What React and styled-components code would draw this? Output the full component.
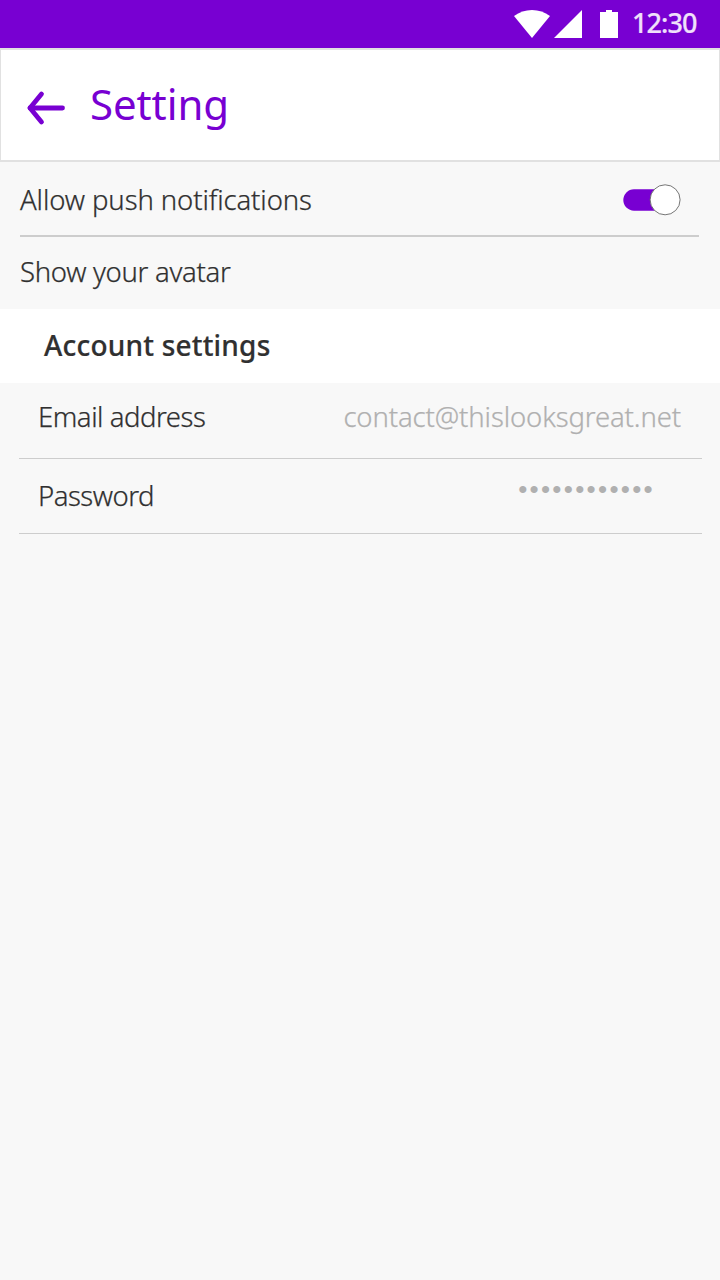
import React from "react";
import styled, { createGlobalStyle } from "styled-components";

const GlobalStyle = createGlobalStyle`
  * { box-sizing: border-box; }
  body {
    margin: 0;
    background: #f8f8f8;
    color: #303030;
    font-family: "Noto Sans", "Open Sans", sans-serif;
  }
`;

const Screen = styled.main`
  width: 720px;
  min-height: 1280px;
  display: flex;
  flex-direction: column;
  background: #f8f8f8;
`;

const StatusBar = styled.div`
  height: 48px;
  display: flex;
  align-items: flex-start;
  justify-content: flex-end;
  padding-right: 24px;
  background: #7800d2;
`;

const StatusIcons = styled.svg`
  width: 108px;
  height: 48px;
  margin-right: 10px;
  fill: #fff;
`;

const Clock = styled.time`
  width: 64px;
  line-height: 46px;
  font-size: 27px;
  font-weight: 500;
  -webkit-text-stroke: 0.2px currentColor;
  letter-spacing: -0.95px;
  white-space: nowrap;
  color: #f0e0fb;
`;

const Header = styled.header`
  height: 114px;
  display: flex;
  border: solid #e1e1e1;
  border-width: 2px 1px;
  padding-left: 25px;
  background: #fff;
`;

const BackButton = styled.button`
  width: 40px;
  margin: 0 24px 0 0;
  padding: 0;
  border: 0;
  background: none;

  svg {
    display: block;
    fill: none;
    stroke: #7800d2;
    stroke-linecap: round;
    stroke-linejoin: round;
  }
`;

const Title = styled.h1`
  margin: 0;
  line-height: 108px;
  font-size: 42px;
  font-weight: 400;
  letter-spacing: -0.1px;
  color: #7800d2;
`;

const Row = styled.div`
  display: flex;
  justify-content: space-between;
  height: ${(p) => p.$height}px;
  margin: ${(p) => p.$margin || "0"};
  padding: ${(p) => p.$padding || "0"};
  border-bottom: ${(p) => p.$line || 0}px solid #cdcdcd;
`;

const Label = styled.span`
  line-height: ${(p) => p.$line}px;
  font-size: 27.5px;
  font-weight: 300;
  -webkit-text-stroke: 0.25px currentColor;
  letter-spacing: ${(p) => p.$track || 0}px;
  white-space: nowrap;
`;

const Value = styled(Label)`
  color: #b0b0b0;
`;

const PasswordDots = styled(Value)`
  font-family: "Liberation Sans", sans-serif;
  font-size: 26px;
  font-weight: 400;
  -webkit-text-stroke: 0;
`;

const SectionTitle = styled.h2`
  height: 74px;
  margin: 0;
  padding-left: 44px;
  line-height: 73px;
  font-size: 28px;
  font-weight: 500;
  -webkit-text-stroke: 0.2px currentColor;
  letter-spacing: 0.2px;
  background: #fff;
`;

const Switch = styled.button`
  width: 59px;
  height: 32px;
  margin-top: 22px;
  padding: 0;
  border: 0;
  background: none;

  svg { display: block; }
`;

export default function App() {
  return (
    <>
      <GlobalStyle />
      <Screen>
        <StatusBar>
          <StatusIcons viewBox="0 0 108 48">
            <path d="M0 16Q8 10 18 10T36 16L18 38Z" />
            <path d="M40 38L68 10V38Z" />
            <path d="M86 12H92V10H98V12H104V38H86Z" />
          </StatusIcons>
          <Clock>12:30</Clock>
        </StatusBar>
        <Header>
          <BackButton aria-label="Back">
            <svg width="40" height="110" viewBox="0 0 40 110">
              <path d="M15.5 44L4 58L15.5 72" strokeWidth="4.8" />
              <path d="M4 58H36.5" strokeWidth="4.8" />
            </svg>
          </BackButton>
          <Title>Setting</Title>
        </Header>
        <Row $height={75} $margin="0 21px 0 20px" $padding="0 18px 0 0" $line={2}>
          <Label $line={76} $track={-0.1}>Allow push notifications</Label>
          <Switch role="switch" aria-checked="true" aria-label="Allow push notifications">
            <svg width="59" height="32" viewBox="0 0 59 32">
              <rect x="1.3" y="5.3" width="50" height="21.4" rx="10.7" fill="#7800d2" />
              <circle cx="43.1" cy="15.8" r="15" fill="#fff" stroke="#666" strokeWidth="0.9" />
            </svg>
          </Switch>
        </Row>
        <Row $height={72} $padding="0 20px">
          <Label $line={70} $track={-0.3}>Show your avatar</Label>
        </Row>
        <SectionTitle>Account settings</SectionTitle>
        <Row $height={76} $margin="0 18px 0 19px" $padding="0 21px 0 19px" $line={1}>
          <Label $line={68} $track={-0.46}>Email address</Label>
          <Value $line={68} $track={-0.12}>contact@thislooksgreat.net</Value>
        </Row>
        <Row $height={75} $margin="0 18px 0 19px" $padding="0 47px 0 19px" $line={1}>
          <Label $line={74} $track={-0.5}>Password</Label>
          <PasswordDots $line={60} $track={2.3}>••••••••••••</PasswordDots>
        </Row>
      </Screen>
    </>
  );
}
